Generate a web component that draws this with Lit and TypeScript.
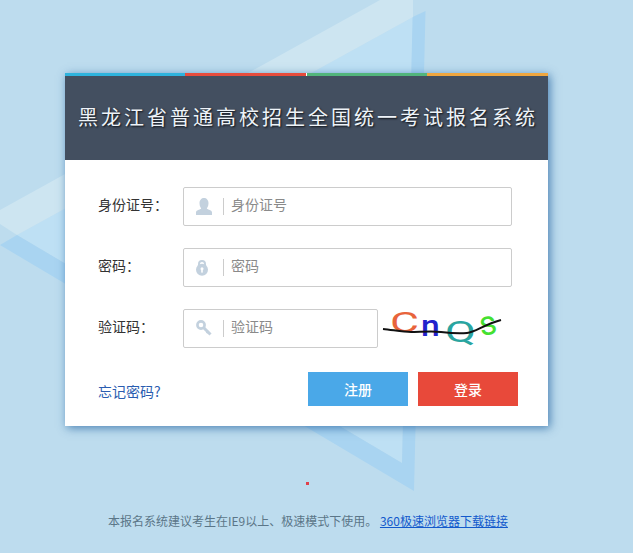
import { LitElement, html, css, svg } from "lit";
import { customElement } from "lit/decorators.js";

const personIcon = svg`<path d="M0 17v-2.6c0-2 3.4-2.6 5.2-3.6 0-1-1.7-2.2-1.7-5.6C3.5 2 5.5 0 8 0s4.500 2 4.500 5.200c0 3.400-1.700 4.600-1.700 5.600 1.800 1 5.200 1.600 5.200 3.600V17z" fill="#c3d1de"/>`;
const lockIcon = svg`<path d="M3 8V5a3 3 0 0 1 6 0v3" fill="none" stroke="#c3d1de" stroke-width="2"/><circle cx="6" cy="10.800" r="6" fill="#c3d1de"/><circle cx="6" cy="9.800" r="1.500" fill="#fff"/><rect x="5.200" y="10" width="1.600" height="3.600" fill="#fff"/>`;
const keyIcon = svg`<circle cx="5" cy="5" r="3.600" fill="none" stroke="#c3d1de" stroke-width="2.600"/><path d="M7.500 7.500 14.500 14.500" stroke="#c3d1de" stroke-width="3"/><path d="M10.500 13 12.500 11" stroke="#c3d1de" stroke-width="2"/>`;

@customElement("app-root")
export class AppRoot extends LitElement {
  static styles = css`
    :host {
      display: block;
      position: relative;
      height: 553px;
      overflow: hidden;
      background: #bddcee;
      font-family: "Noto Sans CJK SC", "Noto Sans", sans-serif;
      font-size: 14px;
      color: #333;
    }

    /* background triangle */
    .backdrop {
      position: absolute;
      left: 0;
      top: 0;
    }

    .page {
      position: relative;
      display: flex;
      flex-direction: column;
      padding: 73px 0 0 65px;
    }

    .card {
      width: 483px;
      background: #fff;
      box-shadow: 2px 2px 9px rgba(38, 100, 160, 0.75);
    }

    .stripes {
      display: flex;
      height: 3px;
    }
    .stripes span {
      flex: 0 0 auto;
    }
    .s1 { width: 120px; background: #2eb3dd; }
    .s2 { width: 121px; background: #e74c3c; border-right: 1px solid #fff; }
    .s3 { width: 120px; background: #52b57c; }
    .s4 { width: 121px; background: #efa63f; }

    .head {
      height: 84px;
      display: flex;
      align-items: center;
      justify-content: center;
      background: #434f60;
      color: #eef3f8;
      font-size: 20px;
      letter-spacing: 3px;
      padding: 0 0 3px 3px;
      box-sizing: border-box;
      text-shadow: 1px 1px 2px #0c0f14;
    }

    .form {
      display: flex;
      flex-direction: column;
      gap: 22px;
      padding: 27px 30px 0 33px;
    }

    .row {
      display: flex;
      align-items: center;
      height: 39px;
    }

    .label {
      width: 85px;
      flex: none;
      padding-bottom: 6px;
    }

    .field {
      box-sizing: border-box;
      width: 329px;
      height: 39px;
      display: flex;
      align-items: center;
      border: 1px solid #ccc;
      border-radius: 2px;
      background: #fff;
    }
    .field.short {
      width: 195px;
    }

    .icon {
      flex: none;
      width: 39px;
      display: flex;
      justify-content: center;
      margin-bottom: 1px;
    }
    .icon.lock svg {
      margin-right: 3px;
    }

    .sep {
      flex: none;
      width: 1px;
      height: 17px;
      margin-bottom: 1px;
      background: #ccc;
    }

    .field input {
      flex: 1;
      min-width: 0;
      height: 24px;
      margin-bottom: 6px;
      padding: 0 0 0 7px;
      border: none;
      outline: none;
      background: transparent;
      font: inherit;
      color: #333;
    }
    .field input::placeholder {
      color: #8a8a8a;
      opacity: 1;
    }

    .captcha {
      margin-left: 5px;
      flex: none;
      overflow: visible;
    }

    .actions {
      display: flex;
      align-items: center;
      padding: 24px 30px 20px 33px;
    }

    .forgot {
      margin-right: auto;
      padding-top: 4px;
      color: #2a5db0;
      text-decoration: none;
    }

    .btn {
      width: 100px;
      height: 34px;
      margin-left: 10px;
      padding: 0;
      border: none;
      color: #fff;
      font: inherit;
      font-weight: 500;
    }
    .btn.reg { background: #4aa8e8; }
    .btn.login { background: #e8493a; }

    .dot {
      width: 3px;
      height: 3px;
      margin: 56px 0 0 241px;
      background: #e0404a;
    }

    .foot {
      margin: 27px 0 0 43px;
      font-size: 12px;
      line-height: 18px;
      color: #5b7688;
      white-space: nowrap;
    }
    .foot a {
      color: #1259cc;
    }
  `;

  render() {
    return html`
      <svg class="backdrop" width="633" height="553" viewBox="0 0 633 553">
        <polygon points="17,235 413,17 402,463" fill="#bee0f4" />
        <polygon
          points="425.500,11 414,491 0,245 17,235 402,463 412.600,17"
          fill="#a9d4f1"
        />
        <polygon points="380,0 413,0 413,17 17,235 0,224 0,210" fill="#cde5f1" />
      </svg>
      <div class="page">
        <div class="card">
          <div class="stripes">
            <span class="s1"></span><span class="s2"></span
            ><span class="s3"></span><span class="s4"></span>
          </div>
          <div class="head">黑龙江省普通高校招生全国统一考试报名系统</div>
          <div class="form">
            <div class="row">
              <span class="label">身份证号：</span>
              <div class="field">
                <span class="icon"
                  ><svg width="16" height="17" viewBox="0 0 16 17">${personIcon}</svg></span
                >
                <span class="sep"></span>
                <input placeholder="身份证号" />
              </div>
            </div>
            <div class="row">
              <span class="label">密码：</span>
              <div class="field">
                <span class="icon lock"
                  ><svg width="12" height="17" viewBox="0 0 12 17">${lockIcon}</svg></span
                >
                <span class="sep"></span>
                <input placeholder="密码" />
              </div>
            </div>
            <div class="row">
              <span class="label">验证码：</span>
              <div class="field short">
                <span class="icon"
                  ><svg width="16" height="16" viewBox="0 0 16 16">${keyIcon}</svg></span
                >
                <span class="sep"></span>
                <input placeholder="验证码" />
              </div>
              <svg class="captcha" width="120" height="39" viewBox="0 0 120 39">
                <g font-family="Roboto, sans-serif">
                  <text transform="translate(7 23) scale(1.65 1)" font-size="27" fill="#e8643c">C</text>
                  <text transform="translate(38 27) scale(1.2 1.05)" font-size="28" font-weight="500" fill="#2222cc">n</text>
                  <text transform="translate(62 33) scale(1.5 1)" font-size="30" fill="#2aa5a0">Q</text>
                  <text transform="translate(98 27) rotate(-10)" font-size="34" fill="#44e030">s</text>
                </g>
                <path
                  d="M0 20C10 21 20 23 28 23S50 22 58 23 75 25 84 24 100 16 118 11"
                  fill="none"
                  stroke="#111"
                  stroke-width="2"
                />
              </svg>
            </div>
          </div>
          <div class="actions">
            <a class="forgot" href="#">忘记密码?</a>
            <button class="btn reg">注册</button>
            <button class="btn login">登录</button>
          </div>
        </div>
        <div class="dot"></div>
        <div class="foot">
          本报名系统建议考生在IE9以上、极速模式下使用。
          <a href="#">360极速浏览器下载链接</a>
        </div>
      </div>
    `;
  }
}
